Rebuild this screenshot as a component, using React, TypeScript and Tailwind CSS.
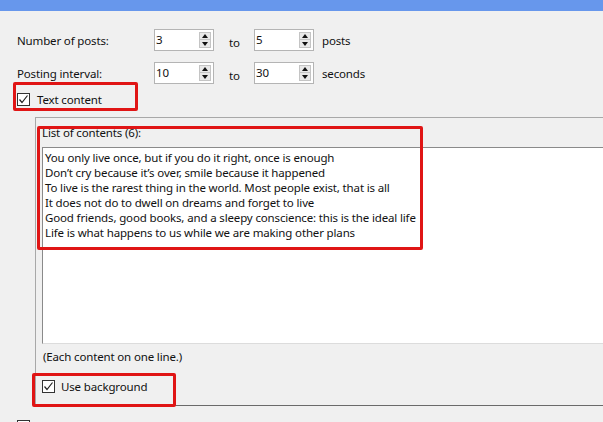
import React from "react"

const lines = [
  "You only live once, but if you do it right, once is enough",
  "Don\u2019t cry because it\u2019s over, smile because it happened",
  "To live is the rarest thing in the world. Most people exist, that is all",
  "It does not do to dwell on dreams and forget to live",
  "Good friends, good books, and a sleepy conscience: this is the ideal life",
  "Life is what happens to us while we are making other plans",
]

function CheckBox({ checked = true }: { checked?: boolean }) {
  return (
    <div className="w-[13px] h-[13px] border border-[#333] bg-white flex items-center justify-center shrink-0">
      {checked && (
        <svg width="11" height="11" viewBox="0 0 11 11">
          <path d="M1.5 5.5 L4 8.5 L9.5 1.5" fill="none" stroke="#222" strokeWidth="1.2" />
        </svg>
      )}
    </div>
  )
}

function SpinBox({ value }: { value: string }) {
  return (
    <div className="w-[60px] h-[22px] border border-[#b4b4b4] bg-white flex pr-[2px] py-[2px]">
      <div className="flex-1 pl-[1px] leading-[16px]">{value}</div>
      <div className="w-[12px] flex flex-col">
        <div className="h-[8px] border border-[#c4c4c4] bg-[#e9e9e9] flex items-center justify-center">
          <svg width="6" height="4" viewBox="0 0 6 4">
            <path d="M0 4 L3 0 L6 4 Z" fill="#111" />
          </svg>
        </div>
        <div className="h-[8px] border border-t-0 border-[#c4c4c4] bg-[#e9e9e9] flex items-center justify-center">
          <svg width="6" height="4" viewBox="0 0 6 4">
            <path d="M0 0 L6 0 L3 4 Z" fill="#111" />
          </svg>
        </div>
      </div>
    </div>
  )
}

function Row({ label, from, to, unit, className }: { label: string; from: string; to: string; unit: string; className: string }) {
  return (
    <div className={"flex items-center h-[22px] " + className}>
      <div className="w-[137px]">{label}</div>
      <SpinBox value={from} />
      <div className="w-[40px] pl-[15px] pt-[4px]">to</div>
      <SpinBox value={to} />
      <div className="ml-[8px]">{unit}</div>
    </div>
  )
}

export default function App() {
  return (
    <div
      className="w-[603px] h-[422px] overflow-hidden bg-[#f0f0f0] text-[11.5px] tracking-[-0.15px] leading-[15px] text-[#111]"
      style={{ fontFamily: '"Noto Sans", "Open Sans", sans-serif' }}
    >
      <div className="h-[11px] bg-[#6797ec]" />
      <div className="pl-[17px]">
        <Row label="Number of posts:" from="3" to="5" unit="posts" className="mt-[18px]" />
        <Row label="Posting interval:" from="10" to="30" unit="seconds" className="mt-[11px]" />

        <div className="relative flex items-center gap-[7px] h-[15px] mt-[8px]">
          <CheckBox />
          <span>Text content</span>
          <div className="absolute -left-[4px] -top-[10px] w-[125px] h-[29px] border-[3px] border-[#e01515] rounded-[2px]" />
        </div>

        <div className="relative ml-[18px] mt-[10px] w-[620px] h-[289px] border border-[#a8a8a8] border-b-[#6a6a6a] px-[6px] pt-[7px]">
          <div>List of contents (6):</div>
          <div className="mt-[7px] h-[197px] w-[600px] bg-white border border-[#8a8a8a] border-b-[#dcdcdc] pl-[2px] pt-[2px]">
            {lines.map((l) => (
              <div key={l} className="whitespace-nowrap">{l}</div>
            ))}
          </div>
          <div className="mt-[5px] ml-[1px]">(Each content on one line.)</div>
          <div className="flex items-center gap-[6px] mt-[16px] h-[13px]">
            <CheckBox />
            <span>Use background</span>
          </div>
          <div className="absolute left-[1px] top-[8px] w-[386px] h-[124px] border-[3px] border-[#e01515] rounded-[2px]" />
          <div className="absolute -left-[4px] top-[255px] w-[144px] h-[34px] border-[3px] border-[#e01515] rounded-[2px]" />
        </div>

        <div className="mt-[14px]">
          <CheckBox checked={false} />
        </div>
      </div>
    </div>
  )
}
